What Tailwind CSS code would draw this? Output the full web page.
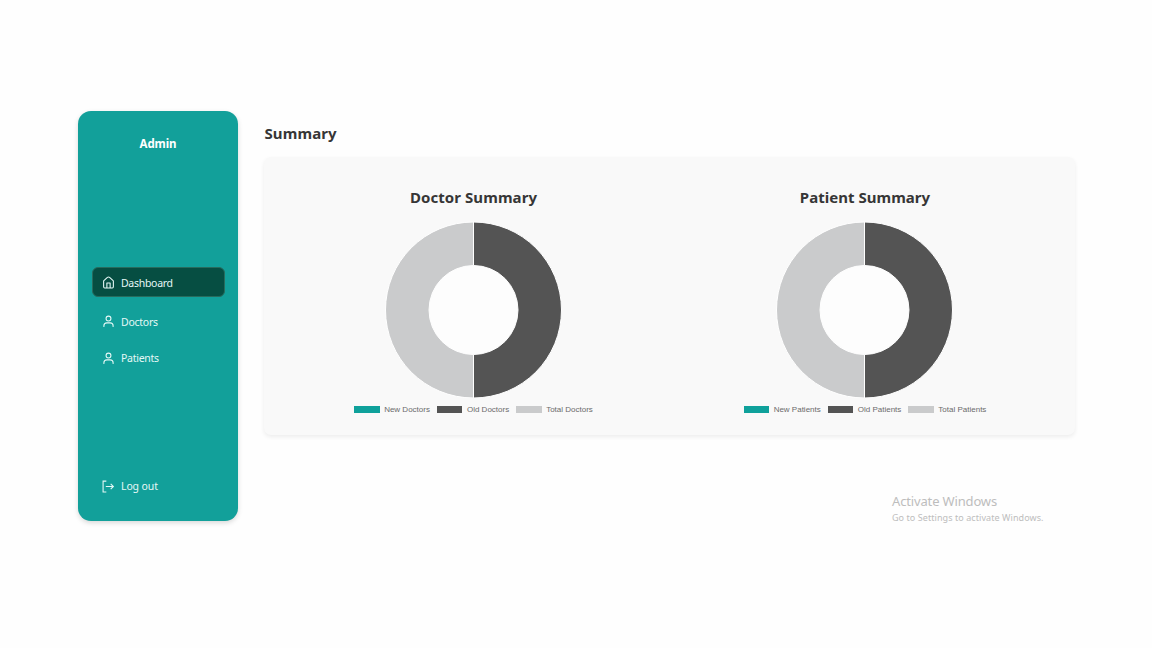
<!DOCTYPE html>
<html lang="en">
<head>
<meta charset="utf-8">
<title>Admin Dashboard</title>
<script src="https://cdn.jsdelivr.net/npm/@tailwindcss/browser@4"></script>
</head>
<body class="flex h-[648px] w-[1152px] items-start overflow-hidden bg-[#fefefe] pt-[111px] pl-[78px] font-['Noto_Sans','Open_Sans',sans-serif] text-[#363636]">
<aside class="flex h-[410px] w-40 shrink-0 flex-col rounded-[13px] bg-[#12a09a] px-[13.500px] text-[#e5f8f6] shadow-[0_2px_5px_rgba(0,0,0,0.15)]">
  <h1 class="mt-[25px] text-center text-[11.5px] leading-4 font-bold tracking-[-0.1px] text-white">Admin</h1>
  <nav class="mt-[115px] flex flex-col text-[10.500px]">
    <a class="flex h-[30px] items-center gap-[6px] rounded-[6px] border border-[#286b5d] bg-[#064e42] px-[9.500px]">
      <svg class="size-[13px]" viewBox="0 0 24 24" fill="none" stroke="currentColor" stroke-width="2" stroke-linejoin="round"><path d="M3 9 10 2.700a3 3 0 0 1 4 0L21 9v11a2 2 0 0 1-2 2H5a2 2 0 0 1-2-2Z"/><path d="M9 22v-9h6v9"/></svg>
      <span class="pt-[3px] tracking-[-0.29px]">Dashboard</span>
    </a>
    <a class="mt-[9px] flex h-[31px] items-center gap-[6px] px-[10.500px]">
      <svg class="size-[13px]" viewBox="0 0 24 24" fill="none" stroke="currentColor" stroke-width="2" stroke-linecap="round"><circle cx="12" cy="6.500" r="4.500"/><path d="M3.500 21v-1a5.500 5.500 0 0 1 5.500-5.500h6a5.500 5.500 0 0 1 5.500 5.500v1"/></svg>
      <span class="pt-[2px] tracking-[-0.26px]">Doctors</span>
    </a>
    <a class="mt-[5.500px] flex h-[31px] items-center gap-[6px] px-[10.500px]">
      <svg class="size-[13px]" viewBox="0 0 24 24" fill="none" stroke="currentColor" stroke-width="2" stroke-linecap="round"><circle cx="12" cy="6.500" r="4.500"/><path d="M3.500 21v-1a5.500 5.500 0 0 1 5.500-5.500h6a5.500 5.500 0 0 1 5.500 5.500v1"/></svg>
      <span class="pt-[2px] tracking-[-0.26px]">Patients</span>
    </a>
  </nav>
  <a class="mt-auto mb-[19.500px] flex h-[31px] items-center gap-[6px] px-[10.500px] text-[10.500px]">
    <svg class="size-[13px]" viewBox="0 0 24 24" fill="none" stroke="currentColor" stroke-width="2"><path d="M8 2H2v20h6M7 12h14M16 7l5 5-5 5"/></svg>
    <span class="pt-[2px] tracking-[-0.12px]">Log out</span>
  </a>
</aside>
<main class="ml-[26px] w-[811px] shrink-0">
  <h2 class="mt-[11px] ml-[0.500px] text-[15px] leading-[22px] font-bold"><span class="tracking-[0.1px]">Summary</span></h2>
  <section class="mt-[13px] flex h-[278px] rounded-[7px] bg-[#f9f9f9] shadow-[0_2px_4px_rgba(0,0,0,0.07)]">
    <article class="ml-[14px] flex w-[391px] shrink-0 flex-col items-center pt-[29px]">
      <h3 class="text-[15px] leading-[22px] font-bold"><span class="tracking-[0.08px]">Doctor Summary</span></h3>
      <svg class="mt-3 h-[178px] w-[178px] shrink-0" viewBox="0 0 178 178"><path d="M88.500 2A88 88 0 0 1 88.500 178V134.500A44.500 44.500 0 0 0 88.500 45.500Z" fill="#545454" stroke="#fff"/><path d="M88.500 178A88 88 0 0 1 88.500 2V45.500A44.500 44.500 0 0 0 88.500 134.500Z" fill="#cacbcc" stroke="#fff"/><circle cx="88.500" cy="90" r="44" fill="#fdfdfd"/></svg>
      <div class="mt-[5px] flex h-[13px] items-center font-['Liberation_Sans',Arial,sans-serif] text-[8px] text-[#6b6b6b]">
        <i class="mr-[4.500px] h-[7px] w-[25.500px] bg-[#0fa19b]"></i><span>New Doctors</span>
        <i class="mr-[4.500px] ml-[7px] h-[7px] w-[25.500px] bg-[#545454]"></i><span>Old Doctors</span>
        <i class="mr-[4.500px] ml-[7px] h-[7px] w-[25.500px] bg-[#cacbcc]"></i><span>Total Doctors</span>
      </div>
    </article>
    <article class="ml-[0.500px] flex w-[391px] shrink-0 flex-col items-center pt-[29px]">
      <h3 class="text-[15px] leading-[22px] font-bold"><span class="tracking-[0.03px]">Patient Summary</span></h3>
      <svg class="mt-3 h-[178px] w-[178px] shrink-0" viewBox="0 0 178 178"><path d="M88.500 2A88 88 0 0 1 88.500 178V134.500A44.500 44.500 0 0 0 88.500 45.500Z" fill="#545454" stroke="#fff"/><path d="M88.500 178A88 88 0 0 1 88.500 2V45.500A44.500 44.500 0 0 0 88.500 134.500Z" fill="#cacbcc" stroke="#fff"/><circle cx="88.500" cy="90" r="44" fill="#fdfdfd"/></svg>
      <div class="mt-[5px] flex h-[13px] items-center font-['Liberation_Sans',Arial,sans-serif] text-[8px] text-[#6b6b6b]">
        <i class="mr-[4.500px] h-[7px] w-[25.500px] bg-[#0fa19b]"></i><span>New Patients</span>
        <i class="mr-[4.500px] ml-[7px] h-[7px] w-[25.500px] bg-[#545454]"></i><span>Old Patients</span>
        <i class="mr-[4.500px] ml-[7px] h-[7px] w-[25.500px] bg-[#cacbcc]"></i><span>Total Patients</span>
      </div>
    </article>
  </section>
</main>
<div class="absolute top-[492px] left-[892px] whitespace-nowrap text-[#bdbdbd]">
  <p class="text-[13px] leading-[19px]"><span class="tracking-[-0.15px]">Activate Windows</span></p>
  <p class="mt-px text-[9px] leading-3"><span class="tracking-[0.07px]">Go to Settings to activate Windows.</span></p>
</div>
</body>
</html>
